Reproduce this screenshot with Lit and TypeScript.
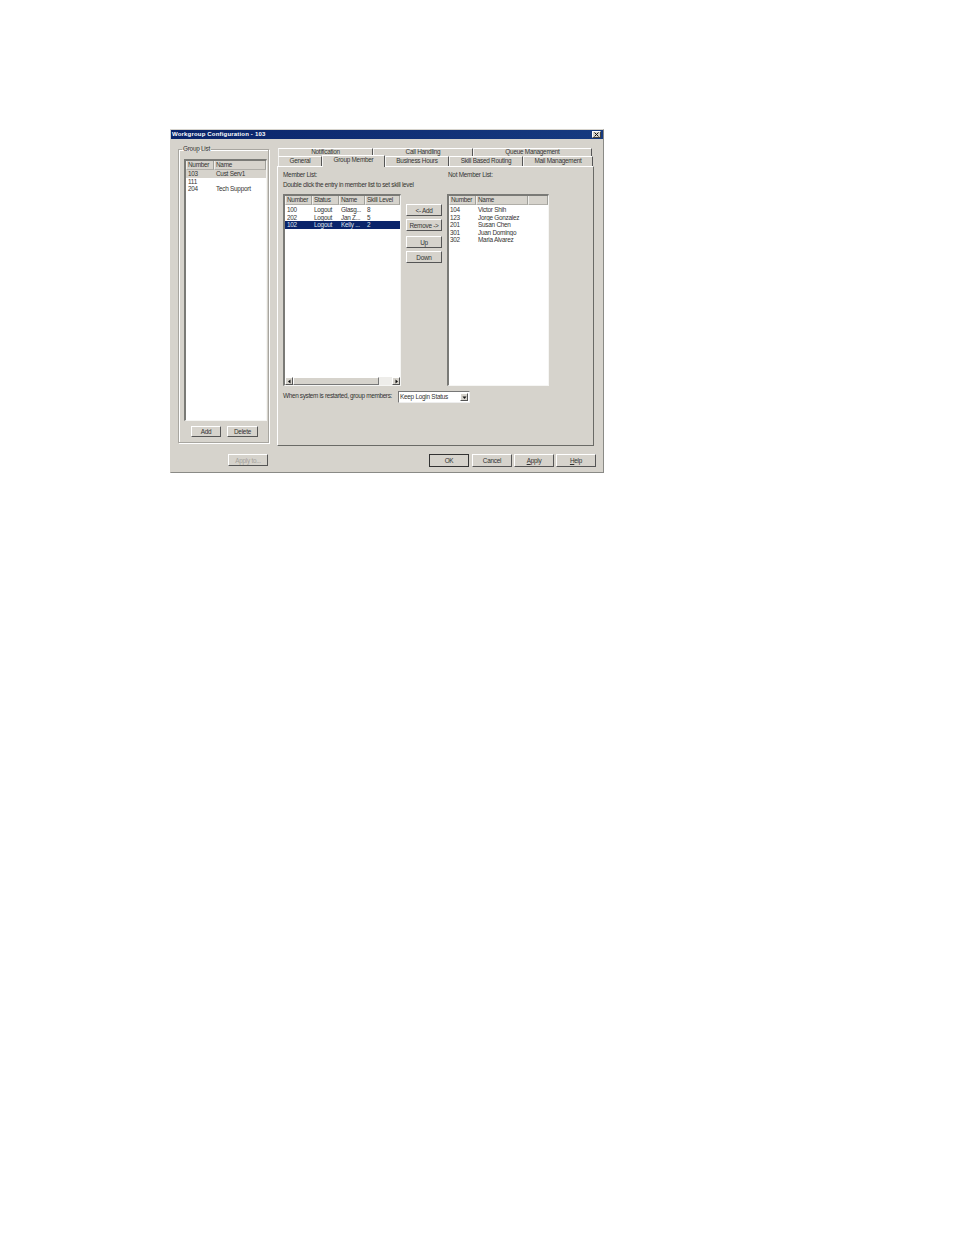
import { LitElement, html, css } from "lit";
import { customElement } from "lit/decorators.js";

type Col = { label: string; width: number };

@customElement("app-root")
export class AppRoot extends LitElement {
  static styles = css`
    :host { display: block; min-height: 1235px; background: #fff; font-family: "Liberation Sans", Arial, sans-serif; font-size: 6.4px; letter-spacing: -.25px; color: #333; }
    * { box-sizing: border-box; }
    .page { padding: 129px 0 0 170px; }
    .dialog { width: 434px; height: 344px; background: #d6d3cc; border: 1px solid; border-color: #d6d3cc #8a8a86 #8a8a86 #d6d3cc; display: flex; flex-direction: column; }
    .title { height: 9px; flex: none; background: linear-gradient(90deg, #0a246a, #163a80); color: #fff; font-weight: bold; font-size: 6px; line-height: 9px; letter-spacing: .18px; padding-left: 1px; display: flex; justify-content: space-between; align-items: center; }
    .close { width: 9px; height: 7px; margin-right: 2px; background: #d6d3cc; border: 1px solid; border-color: #fff #404040 #404040 #fff; display: flex; }
    .close svg { width: 100%; height: 100%; display: block; }
    .main { height: 307px; flex: none; display: flex; }
    .group { width: 91px; height: 298px; margin: 6px 0 0 7px; padding: 0 1px 0 5px; border: 1px solid #a8a6a0; box-shadow: 1px 1px 0 #fff, inset 1px 1px 0 #fff; display: flex; flex-direction: column; min-width: 0; }
    legend { padding: 0 1px; margin-left: -2px; line-height: 8px; height: 8px; }
    .group .list { width: 83px; height: 262px; margin-top: 6px; flex: none; }
    .group .rows { padding-top: 0; }
    .group .actions { display: flex; gap: 6px; margin: 5px 0 0 7px; }
    .group .actions .btn { width: 30px; height: 11px; }
    .group .actions .btn + .btn { width: 31px; }
    .right { width: 317px; margin: 9px 0 0 8px; display: flex; flex-direction: column; }
    .tabs { display: flex; padding: 0 1px; height: 9px; flex: none; }
    .tab { text-align: center; border-top: 1px solid #fff; border-left: 1px solid #f4f4f2; border-right: 1px solid #555; line-height: 6px; white-space: nowrap; }
    .tabs.front { height: 10px; margin-top: -1px; position: relative; }
    .tabs.front .tab { line-height: 8px; }
    .tab.active { background: #d6d3cc; height: 12px; margin-top: -1px; position: relative; z-index: 1; border-right-color: #555; }
    .panel { flex: 1; border: 1px solid; border-color: #fff #6a6a66 #6a6a66 #fff; padding: 4px 5px 0 5px; display: flex; flex-direction: column; }
    .label { line-height: 8px; height: 8px; white-space: nowrap; }
    .labels { display: flex; }
    .labels .label:first-child { width: 165px; }
    .hint { margin-top: 2px; letter-spacing: -.3px; }
    .lists { display: flex; margin-top: 5px; height: 192px; }
    .member { width: 118px; }
    .nonmember { width: 102px; }
    .nonmember .row span:first-child { padding-left: 1px; }
    .movers { width: 36px; margin: 10px 5px 0 5px; display: flex; flex-direction: column; }
    .movers .btn { height: 12px; margin-bottom: 3px; }
    .movers .btn:nth-child(2) { margin-bottom: 5px; }
    .list { background: #fff; border: 2px solid; border-width: 2px 1px 1px 2px; border-color: #7a7a76 #f6f6f4 #f6f6f4 #7a7a76; display: flex; flex-direction: column; height: 100%; overflow: hidden; }
    .head { display: flex; height: 9px; flex: none; background: #d6d3cc; }
    .head span { border-right: 1px solid #a0a09a; border-bottom: 1px solid #b0aea8; border-left: 1px solid #f0efec; padding-left: 1px; line-height: 8px; white-space: nowrap; overflow: hidden; }
    .head span:last-child { flex: 1; }
    .rows { flex: 1; padding-top: 1px; }
    .row { display: flex; height: 7.5px; line-height: 7.5px; }
    .row span { padding-left: 2px; white-space: nowrap; overflow: hidden; }
    .row.sel { background: #0a246a; color: #dfe4ee; }
    .row.grey { background: #d6d3cc; }
    .scroll { height: 8px; flex: none; display: flex; background: #eeedea; }
    .sbtn { width: 8px; background: #d6d3cc; border: 1px solid; border-color: #fff #555 #555 #fff; display: flex; align-items: center; justify-content: center; }
    .thumb { width: 86px; background: #d6d3cc; border: 1px solid; border-color: #fff #777 #777 #fff; }
    .track { flex: 1; }
    .arrow { width: 5px; height: 5px; display: block; }
    .status { display: flex; align-items: center; margin-top: 5px; height: 12px; }
    .status .label { width: 115px; margin-bottom: 2px; letter-spacing: -.33px; }
    .select { width: 72px; height: 12px; background: #fff; border: 1px solid; border-color: #777 #eee #eee #777; display: flex; justify-content: space-between; padding: 1px 1px 1px 1px; line-height: 8px; }
    .select .sbtn { height: 8px; }
    .footer { display: flex; margin-top: 8px; padding: 0 7px 0 57px; }
    .btn { background: #d6d3cc; border: 1px solid; border-color: #fff #555 #555 #fff; text-align: center; display: flex; align-items: center; justify-content: center; white-space: nowrap; }
    .footer .btn { width: 40px; height: 13px; }
    .footer .btn.disabled { height: 12px; color: #a3a19b; margin-right: 161px; }
    .footer .btn.default { border: 1px solid #333; margin-right: 3px; }
    .footer .gap { margin-right: 2px; }
    u { text-decoration-thickness: .5px; text-underline-offset: 1px; }
  `;

  private list(cols: Col[], rows: string[][], mark: number, cls: string) {
    return html`<div class="head">${cols.map((c) => html`<span style="width:${c.width}px">${c.label}</span>`)}</div>
      <div class="rows">
        ${rows.map(
          (r, i) => html`<div class="row ${i === mark ? cls : ""}">
            ${r.map((v, j) => html`<span style="width:${cols[j].width}px">${v}</span>`)}
          </div>`
        )}
      </div>`;
  }

  private arrow(d: string) {
    return html`<svg class="arrow" viewBox="0 0 5 5"><path d="${d}" fill="#111"></path></svg>`;
  }

  render() {
    const groupCols = [{ label: "Number", width: 28 }, { label: "Name", width: 51 }];
    const memberCols = [
      { label: "Number", width: 27 }, { label: "Status", width: 27 },
      { label: "Name", width: 26 }, { label: "Skill Level", width: 34 },
    ];
    const otherCols = [{ label: "Number", width: 27 }, { label: "Name", width: 52 }, { label: "", width: 19 }];
    const row1 = [["Notification", 95], ["Call Handling", 100], ["Queue Management", 119]] as const;
    const row2 = [["General", 44], ["Group Member", 63], ["Business Hours", 64], ["Skill Based Routing", 74], ["Mail Management", 70]] as const;
    return html`<div class="page"><div class="dialog">
      <div class="title"><span>Workgroup Configuration - 103</span>
        <span class="close"><svg viewBox="0 0 7 5"><path d="M1.5 .5 5.5 4.5M5.5 .5 1.5 4.5" stroke="#111" stroke-width="1" fill="none"></path></svg></span></div>
      <div class="main">
        <fieldset class="group"><legend>Group List</legend>
          <div class="list">
            ${this.list(groupCols, [["103", "Cust Serv1"], ["111", ""], ["204", "Tech Support"]], 0, "grey")}
          </div>
          <div class="actions"><div class="btn">Add</div><div class="btn">Delete</div></div>
        </fieldset>
        <div class="right">
          <div class="tabs">${row1.map(([t, w]) => html`<div class="tab" style="width:${w}px">${t}</div>`)}</div>
          <div class="tabs front">${row2.map(([t, w], i) => html`<div class="tab ${i === 1 ? "active" : ""}" style="width:${w}px">${t}</div>`)}</div>
          <div class="panel">
            <div class="labels"><div class="label">Member List:</div><div class="label">Not Member List:</div></div>
            <div class="label hint">Double click the entry in member list to set skill level</div>
            <div class="lists">
              <div class="member"><div class="list">
                ${this.list(memberCols, [["100", "Logout", "Glasg...", "8"], ["202", "Logout", "Jan Z...", "5"], ["102", "Logout", "Kelly ...", "2"]], 2, "sel")}
                <div class="scroll">
                  <div class="sbtn">${this.arrow("M3.5 .5v4L1 2.5z")}</div>
                  <div class="thumb"></div><div class="track"></div>
                  <div class="sbtn">${this.arrow("M1.5 .5v4L4 2.5z")}</div>
                </div>
              </div></div>
              <div class="movers">
                <div class="btn">&lt;- Add</div><div class="btn">Remove -&gt;</div><div class="btn">Up</div><div class="btn">Down</div>
              </div>
              <div class="nonmember"><div class="list">
                ${this.list(otherCols, [["104", "Victor Shih", ""], ["123", "Jorge Gonzalez", ""], ["201", "Susan Chen", ""], ["301", "Juan Domingo", ""], ["302", "Maria Alvarez", ""]], -1, "")}
              </div></div>
            </div>
            <div class="status"><div class="label">When system is restarted, group members:</div>
              <div class="select"><span>Keep Login Status</span><span class="sbtn">${this.arrow("M.5 1.5h4L2.5 4z")}</span></div>
            </div>
          </div>
        </div>
      </div>
      <div class="footer">
        <div class="btn disabled">Apply to...</div>
        <div class="btn default">OK</div>
        <div class="btn gap">Cancel</div>
        <div class="btn gap"><span><u>A</u>pply</span></div>
        <div class="btn"><span><u>H</u>elp</span></div>
      </div>
    </div></div>`;
  }
}
